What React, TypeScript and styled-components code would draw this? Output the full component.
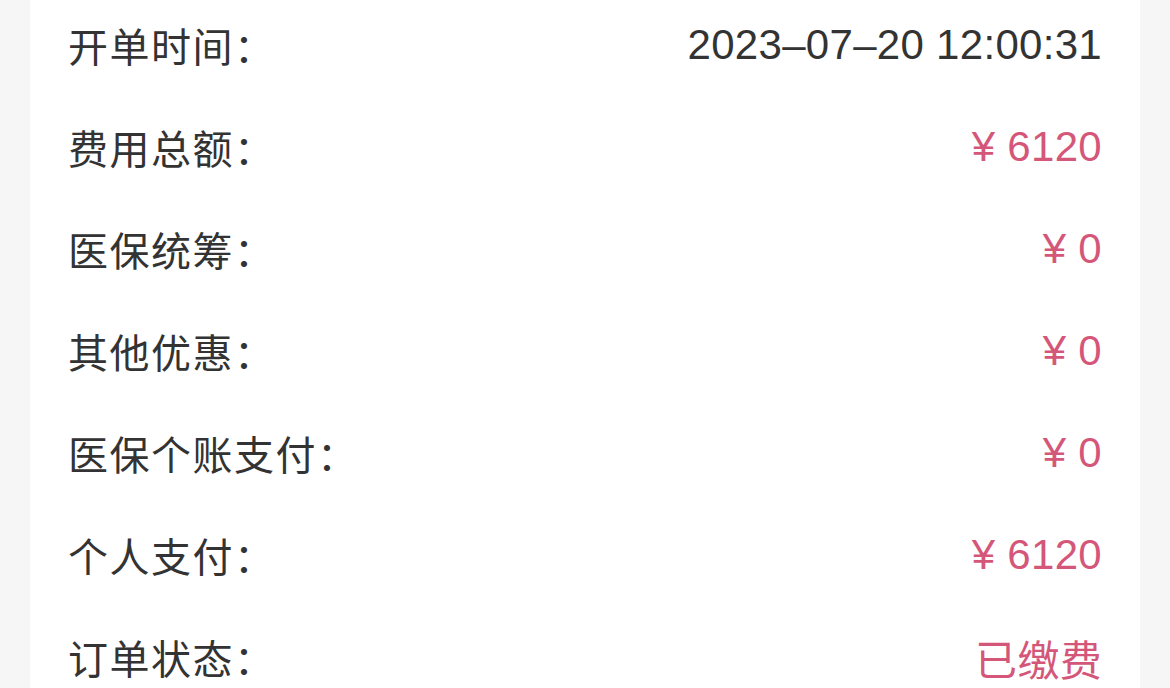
import React from "react";
import styled, { createGlobalStyle } from "styled-components";

const Global = createGlobalStyle`
  html, body { margin: 0; padding: 0; background: #f6f6f6; }
  body { font-family: "Liberation Sans", "Noto Sans CJK SC", sans-serif; }
`;

const Page = styled.div`
  width: 1170px;
  height: 688px;
  overflow: hidden;
  background: #f6f6f6;
  padding: 0 30px;
  box-sizing: border-box;
`;

const Card = styled.div`
  background: #ffffff;
  margin-top: -6px;
  padding: 0 38px 0 38px;
  display: flex;
  flex-direction: column;
`;

const Row = styled.div`
  height: 102px;
  display: flex;
  align-items: center;
  justify-content: space-between;
`;

const Label = styled.span`
  font-family: "Noto Sans CJK SC", sans-serif;
  font-size: 40px;
  color: #333333;
  letter-spacing: 1.5px;
`;

const Value = styled.span<{ $accent?: boolean }>`
  font-family: "Liberation Sans", "Noto Sans CJK SC", sans-serif;
  font-size: 42px;
  letter-spacing: 0.3px;
  color: ${(p) => (p.$accent ? "#d4577a" : "#333333")};
`;

const rows: { label: string; value: string; accent?: boolean }[] = [
  { label: "开单时间：", value: "2023–07–20 12:00:31" },
  { label: "费用总额：", value: "¥ 6120", accent: true },
  { label: "医保统筹：", value: "¥ 0", accent: true },
  { label: "其他优惠：", value: "¥ 0", accent: true },
  { label: "医保个账支付：", value: "¥ 0", accent: true },
  { label: "个人支付：", value: "¥ 6120", accent: true },
  { label: "订单状态：", value: "已缴费", accent: true },
];

export default function App() {
  return (
    <Page>
      <Global />
      <Card>
        {rows.map((r) => (
          <Row key={r.label}>
            <Label>{r.label}</Label>
            <Value $accent={r.accent}>{r.value}</Value>
          </Row>
        ))}
      </Card>
    </Page>
  );
}
